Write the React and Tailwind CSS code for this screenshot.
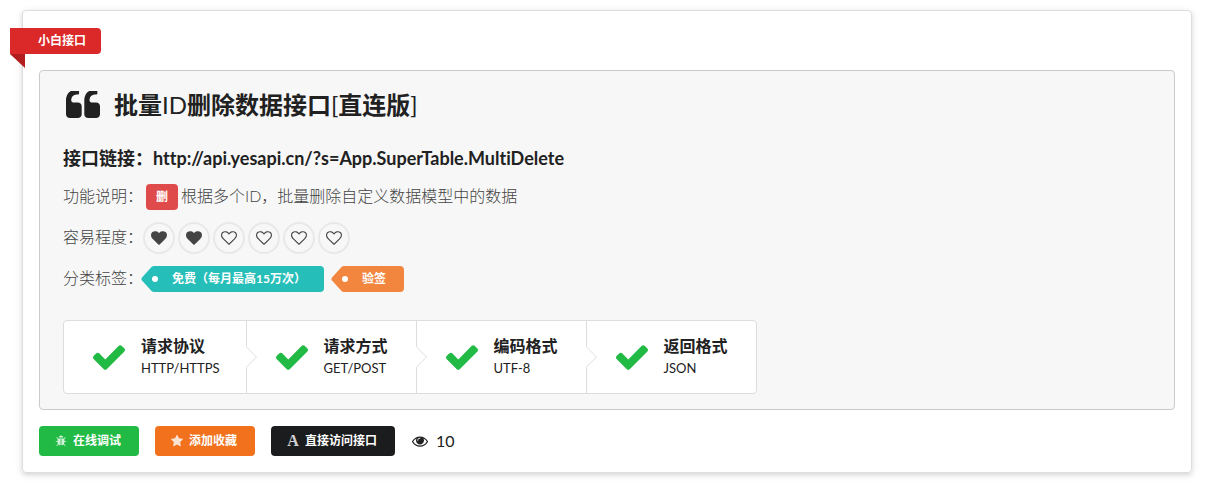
import clsx from 'clsx';

const icons = {
  quote: {
    box: '64 256 1664 1280',
    path: 'M832 960v384q0 80-56 136t-136 56h-384q-80 0-136-56t-56-136v-704q0-104 40.5-198.5t109.5-163.5 163.5-109.5 198.5-40.5h64q26 0 45 19t19 45v128q0 26-19 45t-45 19h-64q-106 0-181 75t-75 181v32q0 40 28 68t68 28h224q80 0 136 56t56 136zm896 0v384q0 80-56 136t-136 56h-384q-80 0-136-56t-56-136v-704q0-104 40.5-198.5t109.5-163.5 163.5-109.5 198.5-40.5h64q26 0 45 19t19 45v128q0 26-19 45t-45 19h-64q-106 0-181 75t-75 181v32q0 40 28 68t68 28h224q80 0 136 56t56 136z',
  },
  check: {
    box: '121 334 1550 1188',
    path: 'M1671 566q0 40-28 68l-724 724-136 136q-28 28-68 28t-68-28l-136-136-362-362q-28-28-28-68t28-68l136-136q28-28 68-28t68 28l294 295 656-657q28-28 68-28t68 28l136 136q28 28 28 68z',
  },
  heart: {
    box: '0 0 1792 1792',
    path: 'M896 1664q-26 0-44-18l-624-602q-10-8-27.5-26t-55.5-65.5-68-97.5-53.5-121-23.5-138q0-220 127-344t351-124q62 0 126.5 21.5t120 58 95.5 68.5 76 68q36-36 76-68t95.5-68.5 120-58 126.5-21.5q224 0 351 124t127 344q0 221-229 450l-623 600q-18 18-44 18z',
  },
  heartOutline: {
    box: '0 0 1792 1792',
    path: 'M1664 596q0-81-21.5-143t-55-98.5-81.5-59.5-94-31-98-8-112 25.5-110.5 64-86.5 72-60 61.5q-18 22-49 22t-49-22q-24-28-60-61.5t-86.5-72-110.5-64-112-25.5-98 8-94 31-81.5 59.5-55 98.5-21.5 143q0 168 187 355l581 560 580-559q188-188 188-356zm128 0q0 221-229 450l-623 600q-18 18-44 18t-44-18l-624-602q-10-8-27.5-26t-55.5-65.5-68-97.5-53.5-121-23.5-138q0-220 127-344t351-124q62 0 126.5 21.5t120 58 95.5 68.5 76 68q36-36 76-68t95.5-68.5 120-58 126.5-21.5q224 0 351 124t127 344z',
  },
  bug: {
    box: '0 0 1792 1792',
    path: 'M1696 960q0 26-19 45t-45 19h-224q0 171-67 290l208 209q19 19 19 45t-19 45q-18 19-45 19t-45-19l-198-197q-5 5-15 13t-42 28.5-65 36.5-82 29-97 13v-896h-128v896q-51 0-101.5-13.5t-87-33-66-39-43.5-32.5l-15-14-183 207q-20 21-48 21-24 0-43-16-19-18-20.5-44.5t15.5-46.5l202-227q-58-114-58-274h-224q-26 0-45-19t-19-45 19-45 45-19h224v-294l-173-173q-19-19-19-45t19-45 45-19 45 19l173 173h844l173-173q19-19 45-19t45 19 19 45-19 45l-173 173v294h224q26 0 45 19t19 45zm-480-576h-640q0-133 93.5-226.5t226.5-93.5 226.5 93.5 93.5 226.5z',
  },
  star: {
    box: '64 64 1664 1664',
    path: 'M1728 647q0 22-26 48l-363 354 86 500q1 7 1 20 0 21-10.5 35.5t-30.5 14.5q-19 0-40-12l-449-236-449 236q-22 12-40 12-21 0-31.5-14.5t-10.5-35.5q0-6 2-20l86-500-364-354q-25-27-25-48 0-37 56-46l502-73 225-455q19-41 49-41t49 41l225 455 502 73q56 9 56 46z',
  },
  eye: {
    box: '0 0 1792 1792',
    path: 'M1664 960q-152-236-381-353 61 104 61 225 0 185-131.5 316.5t-316.5 131.5-316.5-131.5-131.5-316.5q0-121 61-225-229 117-381 353 133 205 333.5 326.5t434.5 121.5 434.5-121.5 333.5-326.5zm-720-384q0-20-14-34t-34-14q-125 0-214.5 89.5t-89.5 214.5q0 20 14 34t34 14 34-14 14-34q0-86 61-147t147-61q20 0 34-14t14-34zm848 384q0 34-20 69-140 230-376.5 368.5t-499.5 138.5-499.5-139-376.5-368q-20-35-20-69t20-69q140-229 376.5-368t499.5-139 499.5 139 376.5 368q20 35 20 69z',
  },
};

const Icon = ({ name, className }) => (
  <svg viewBox={icons[name].box} className={clsx('shrink-0 fill-current', className)} aria-hidden="true">
    <path d={icons[name].path} />
  </svg>
);

const Tag = ({ color, pointColor, children }) => (
  <a href="#" className={clsx('relative flex h-[26px] items-center rounded-r pl-[17px] pr-[18px] text-xs font-bold text-white', color)}>
    <svg viewBox="0 0 14 26" className="absolute right-full top-0 h-[26px] w-3.5" aria-hidden="true">
      <path d="M14 0h-1q-1.500 0-2.500 1L1 11.500q-1.200 1.500 0 3L10.500 25q1 1 2.500 1h1z" className={pointColor} />
    </svg>
    <span className="absolute -left-[3px] top-[10px] h-1.5 w-1.5 rounded-full bg-white" />
    {children}
  </a>
);

const Row = ({ label, className, children }) => (
  <div className={clsx('flex items-center text-base', className)}>
    <span className="w-20 shrink-0 pb-0.5 leading-6">{label}</span>
    {children}
  </div>
);

const App = () => {
  const steps = [
    { title: '请求协议', description: 'HTTP/HTTPS' },
    { title: '请求方式', description: 'GET/POST' },
    { title: '编码格式', description: 'UTF-8' },
    { title: '返回格式', description: 'JSON' },
  ];

  const actions = [
    { icon: <Icon name="bug" className="h-3 w-3" />, label: '在线调试', color: 'bg-[#21ba45]' },
    { icon: <Icon name="star" className="h-3 w-3" />, label: '添加收藏', color: 'bg-[#f2711c]' },
    { icon: 'A', label: '直接访问接口', color: 'bg-[#1b1c1d]' },
  ];

  const hearts = [true, true, false, false, false, false];

  return (
    <div className="bg-white pt-[10px] pr-[17px] pb-5 pl-[22px] font-['Lato','Noto_Sans_CJK_SC',sans-serif] text-[#212121] [font-variant-ligatures:none]">
      <main className="rounded border border-[#dcddde] px-4 pt-[17px] pb-4 shadow-[0_2px_4px_0_rgba(34,36,38,0.12),0_2px_10px_0_rgba(34,36,38,0.08)]">
        {/* Ribbon */}
        <a href="#" className="relative -ml-[29px] flex h-[26px] w-[91px] items-center rounded-r bg-[#db2828] pl-7 text-xs font-bold text-white">
          小白接口
          <svg viewBox="0 0 15 14" className="absolute left-0 top-full h-3.5 w-[15px]" aria-hidden="true">
            <path d="M0 0h15v14z" className="fill-[#b21e1e]" />
          </svg>
        </a>

        {/* API details */}
        <section className="mt-4 rounded border border-[#c9cacb] bg-[#f7f7f7] px-[23px] pt-4 pb-[15px]">
          <h1 className="flex h-9 items-center gap-3.5 pl-[3px] text-2xl font-bold">
            <Icon name="quote" className="h-7 w-[34px]" />
            <span>
              批量<span className="font-normal">ID</span>删除数据接口<span className="font-normal">[</span>直连版<span className="font-normal">]</span>
            </span>
          </h1>

          <h2 className="mt-[21px] text-lg leading-7 font-bold">
            接口链接：http://api.yesapi.cn/?s=App.SuperTable.MultiDelete
          </h2>

          <div className="mt-[9px] font-light text-[#444444]">
            <Row label="功能说明：" className="h-8">
              <span className="mx-[3px] flex h-[26px] items-center rounded bg-[#df4b4b] px-[10px] text-xs font-bold text-white">
                删
              </span>
              <span className="pb-0.5 leading-6">根据多个ID，批量删除自定义数据模型中的数据</span>
            </Row>
            <Row label="容易程度：" className="mt-[7px] h-9">
              <div className="flex gap-[3px]">
                {hearts.map((active, index) => (
                  <span key={index} className="flex h-8 w-8 items-center justify-center rounded-full border-2 border-[#e8e8e8]">
                    <Icon name={active ? 'heart' : 'heartOutline'} className="h-4 w-4" />
                  </span>
                ))}
              </div>
            </Row>
            <Row label="分类标签：" className="mt-2 h-[30px]">
              <div className="ml-3 flex gap-[21px]">
                <Tag color="bg-[#26beb8]" pointColor="fill-[#26beb8]">免费（每月最高15万次）</Tag>
                <Tag color="bg-[#f2863f]" pointColor="fill-[#f2863f]">验签</Tag>
              </div>
            </Row>
          </div>

          {/* Steps */}
          <ul className="mt-[26px] inline-flex rounded border border-[#dcddde] bg-white align-top">
            {steps.map((step, index) => (
              <li
                key={step.title}
                className={clsx('relative flex h-[72px] items-center gap-4 pl-[29px] pr-7 first:pr-[26px]', index < steps.length - 1 && 'border-r border-[#dcddde]')}
              >
                <Icon name="check" className="h-[25px] w-8 text-[#21ba45]" />
                <div className="pb-0.5">
                  <div className="text-base leading-6 font-bold">{step.title}</div>
                  <div className="text-[13px] leading-5">{step.description}</div>
                </div>
                {index < steps.length - 1 && (
                  <svg viewBox="0 0 12 22" className="absolute top-[25px] left-full z-10 h-[22px] w-3" aria-hidden="true">
                    <path d="M0 0v22L11 11z" className="fill-white" />
                    <path d="M0 0.500L10.500 11 0 21.500" className="fill-none stroke-[#dcddde]" />
                  </svg>
                )}
              </li>
            ))}
          </ul>
        </section>

        {/* Actions */}
        <div className="mt-4 flex items-center gap-4">
          {actions.map((action) => (
            <button key={action.label} type="button" className={clsx('flex h-[30px] items-center gap-1.5 rounded pl-4 pr-[18px] text-xs font-bold text-white', action.color)}>
              <span className="flex w-3 justify-center font-['Liberation_Serif',serif] text-base opacity-80" aria-hidden="true">
                {action.icon}
              </span>
              {action.label}
            </button>
          ))}
          <span className="flex items-center gap-2 pl-px text-base leading-6">
            <Icon name="eye" className="h-4 w-4" />
            10
          </span>
        </div>
      </main>
    </div>
  );
};

export default App;
